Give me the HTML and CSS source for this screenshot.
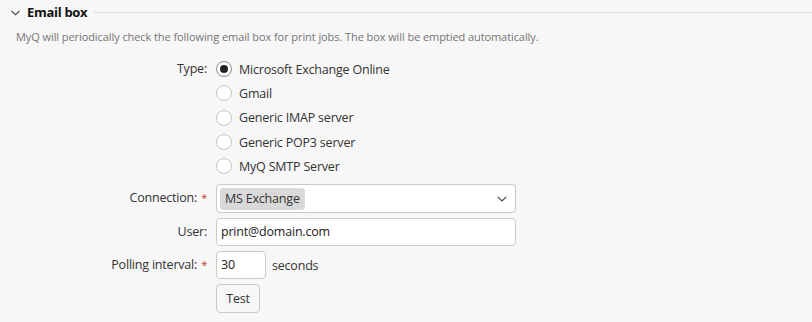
FILE: index.html
```html
<!DOCTYPE html>
<html>
<head>
<meta charset="utf-8">
<link rel="stylesheet" href="styles.css">
</head>
<body>
<section class="panel">
  <header class="panel-head">
    <svg class="chev" width="9" height="6" viewBox="0 0 9 6"><path d="M0.5 0.8 L4.5 4.8 L8.5 0.8" fill="none" stroke="#333" stroke-width="1.1"/></svg>
    <h2 class="title">Email box</h2>
    <span class="rule"></span>
  </header>
  <p class="desc">MyQ will periodically check the following email box for print jobs. The box will be emptied automatically.</p>
  <div class="form">
    <div class="label label-type">Type:</div>
    <div class="radios">
      <label class="radio"><span class="dot checked"></span>Microsoft Exchange Online</label>
      <label class="radio"><span class="dot"></span>Gmail</label>
      <label class="radio"><span class="dot"></span>Generic IMAP server</label>
      <label class="radio"><span class="dot"></span>Generic POP3 server</label>
      <label class="radio"><span class="dot"></span>MyQ SMTP Server</label>
    </div>

    <div class="label">Connection:<span class="req">*</span></div>
    <div class="select">
      <span class="tag">MS Exchange</span>
      <svg class="caret" width="10" height="6" viewBox="0 0 10 6"><path d="M0.8 0.8 L5 5 L9.2 0.8" fill="none" stroke="#444" stroke-width="1.2"/></svg>
    </div>

    <div class="label">User:</div>
    <div class="input wide">print@domain.com</div>

    <div class="label">Polling interval:<span class="req">*</span></div>
    <div class="inline">
      <div class="input short">30</div>
      <span class="unit">seconds</span>
    </div>

    <div class="label"></div>
    <div><button class="btn">Test</button></div>
  </div>
</section>
</body>
</html>
```

FILE: styles.css
```css
html, body {
  margin: 0;
  padding: 0;
  background: #f7f7f7;
  width: 812px;
  height: 322px;
  overflow: hidden;
  font-family: "Open Sans", "Noto Sans", sans-serif;
  color: #333;
}

.panel {
  padding: 0;
}

.panel-head {
  display: flex;
  align-items: center;
  height: 24px;
  padding-left: 11px;
}

.chev {
  display: block;
  margin-top: 1px;
}

.title {
  margin: 0 0 0 7px;
  font-size: 13px;
  font-weight: 700;
  color: #111;
  letter-spacing: -0.3px;
}

.rule {
  flex: 1;
  height: 1px;
  background: #dcdcdc;
  margin-left: 7px;
}

.desc {
  margin: 5px 0 0 16px;
  font-size: 11px;
  line-height: 16px;
  color: #757575;
  letter-spacing: -0.08px;
}

.form {
  display: grid;
  grid-template-columns: 207px 1fr;
  column-gap: 9px;
  row-gap: 5px;
  margin-top: 12px;
  font-size: 12.5px;
}

.label {
  text-align: right;
  line-height: 28px;
  color: #333;
  white-space: nowrap;
  letter-spacing: -0.2px;
}

.label-type {
  line-height: 24px;
}

.req {
  color: #c0392b;
  margin-left: 4px;
  font-size: 11px;
}

.radios {
  display: flex;
  flex-direction: column;
  margin-bottom: 1px;
}

.radio {
  display: flex;
  align-items: center;
  height: 24.3px;
  color: #333;
  letter-spacing: -0.2px;
}

.dot {
  box-sizing: border-box;
  width: 16px;
  height: 16px;
  border-radius: 50%;
  border: 1px solid #c4c4c4;
  background: #fff;
  margin-right: 7px;
  position: relative;
  flex: none;
}

.dot.checked {
  border-color: #8a8a8a;
}

.dot.checked::after {
  content: "";
  position: absolute;
  left: 3px;
  top: 3px;
  width: 8px;
  height: 8px;
  border-radius: 50%;
  background: #222;
}

.select {
  box-sizing: border-box;
  width: 300px;
  height: 29px;
  border: 1px solid #c9c9c9;
  border-radius: 4px;
  background: #fff;
  display: flex;
  align-items: center;
  justify-content: space-between;
  padding: 0 8px 0 3px;
}

.tag {
  background: #d9d9d9;
  border-radius: 4px;
  padding: 0 5px;
  line-height: 22px;
  color: #333;
  letter-spacing: -0.2px;
}

.caret {
  display: block;
  margin-top: 1px;
}

.input {
  box-sizing: border-box;
  height: 28px;
  border: 1px solid #c9c9c9;
  border-radius: 4px;
  background: #fff;
  line-height: 26px;
  padding: 0 4px;
  color: #222;
  letter-spacing: -0.2px;
}

.input.wide {
  width: 300px;
}

.input.short {
  width: 50px;
}

.inline {
  display: flex;
  align-items: center;
}

.unit {
  margin-left: 6px;
  letter-spacing: -0.2px;
}

.btn {
  box-sizing: border-box;
  width: 44px;
  height: 29px;
  border: 1px solid #c9c9c9;
  border-radius: 4px;
  background: #f7f7f7;
  font-family: inherit;
  font-size: 12.5px;
  color: #333;
  padding: 0;
  letter-spacing: -0.2px;
}
```
